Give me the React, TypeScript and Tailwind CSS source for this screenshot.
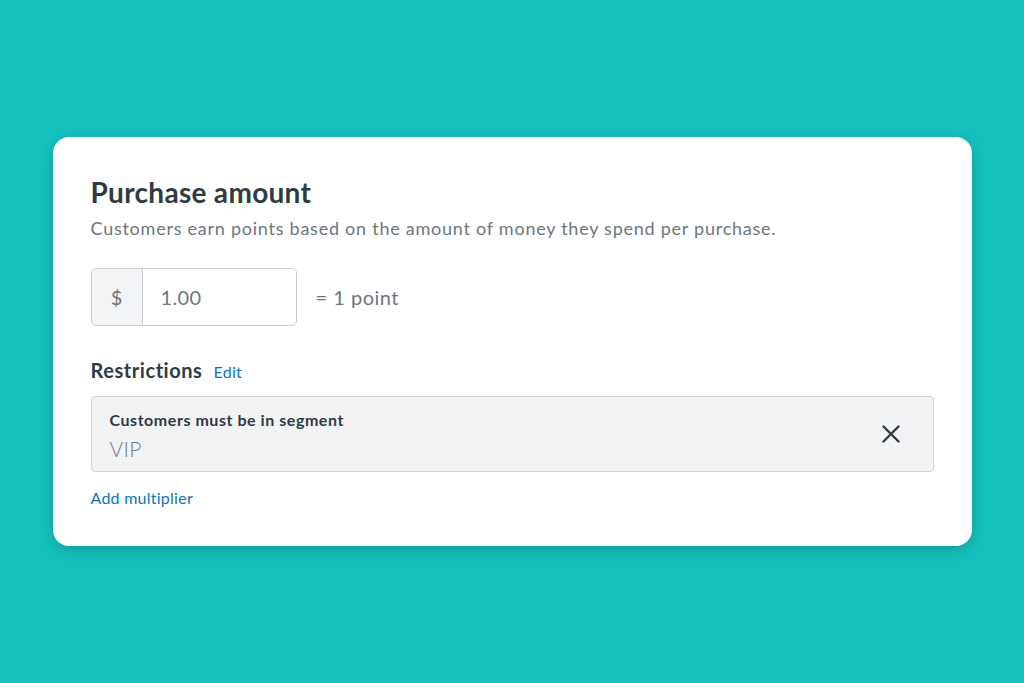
import React from "react";

export default function App() {
  return (
    <div
      className="w-[1024px] h-[683px] bg-[#14c0bd] flex items-start justify-center pt-[137px]"
      style={{ fontFamily: "Lato, 'Noto Sans', sans-serif" }}
    >
      <div className="w-[919px] h-[409px] bg-white rounded-[16px] shadow-[0_4px_14px_rgba(0,0,0,0.18)] pl-[38px] pr-[38px] pt-[37px] flex flex-col">
        <h1 className="text-[28px] leading-[36px] font-bold text-[#2d3b45] tracking-[0.3px]">Purchase amount</h1>
        <p className="mt-[6px] text-[18px] leading-[24px] text-[#6b7780] tracking-[0.75px]">
          Customers earn points based on the amount of money they spend per purchase.
        </p>
        <div className="mt-[28px] flex items-center">
          <div className="w-[206px] h-[58px] flex border border-[#c7cdd1] rounded-[5px] overflow-hidden">
            <div className="w-[51px] bg-[#f3f4f5] border-r border-[#c7cdd1] flex items-center justify-center text-[20px] text-[#6b7780]">
              $
            </div>
            <div className="flex-1 flex items-center pl-[18px] text-[20px] text-[#6b7780] tracking-[0.4px]">1.00</div>
          </div>
          <span className="ml-[19px] text-[20px] text-[#6b7780] tracking-[0.5px]">= 1 point</span>
        </div>
        <div className="mt-[31px] h-[26px] flex items-baseline">
          <h2 className="text-[20px] leading-[26px] font-bold text-[#2d3b45] tracking-[0.55px]">Restrictions</h2>
          <a className="ml-[11px] text-[16px] text-[#0a74c4] tracking-[0.3px]">Edit</a>
        </div>
        <div className="mt-[13px] h-[76px] bg-[#f2f3f5] border border-[#cfd5d9] rounded-[4px] flex items-start pl-[18px] pr-[33px] pt-[13px]">
          <div className="flex-1 flex flex-col">
            <span className="text-[16px] leading-[20px] font-bold text-[#2d3b45] tracking-[0.55px]">
              Customers must be in segment
            </span>
            <span className="mt-[6px] text-[21px] leading-[26px] text-[#737d85] font-light tracking-[0.3px]">VIP</span>
          </div>
          <svg width="18" height="18" viewBox="0 0 18 18" className="text-[#2d3b45] mt-[15px]">
            <path d="M1.5 1.5 L16.5 16.5 M16.5 1.5 L1.5 16.5" stroke="currentColor" strokeWidth="2.4" strokeLinecap="round" />
          </svg>
        </div>
        <a className="mt-[16px] text-[16px] leading-[20px] text-[#0a74c4] tracking-[0.25px]">Add multiplier</a>
      </div>
    </div>
  );
}
